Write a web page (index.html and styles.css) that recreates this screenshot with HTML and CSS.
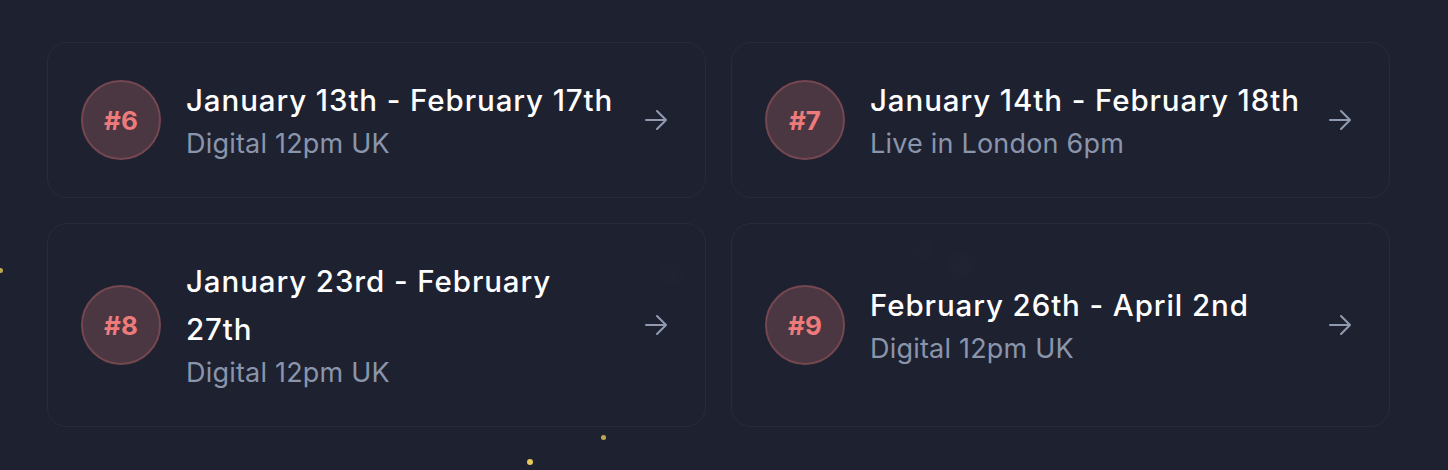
FILE: index.html
```html
<!DOCTYPE html>
<html lang="en">
<head>
<meta charset="utf-8">
<title>Cohorts</title>
<link rel="stylesheet" href="styles.css">
</head>
<body>
<div class="page">
  <span class="dot dot-a"></span>
  <span class="dot dot-b"></span>
  <span class="dot dot-c"></span>
  <span class="glow glow-a"></span>
  <span class="glow glow-b"></span>
  <span class="glow glow-c"></span>
  <div class="grid">
    <a class="card" href="#">
      <div class="badge">#6</div>
      <div class="info">
        <div class="title">January 13th - February 17th</div>
        <div class="sub">Digital 12pm UK</div>
      </div>
      <svg class="arrow" viewBox="0 0 24 24" width="24" height="24"><path d="M2 12h20M13 3l9 9-9 9" fill="none" stroke="currentColor" stroke-width="2.1" stroke-linecap="round" stroke-linejoin="round"/></svg>
    </a>
    <a class="card" href="#">
      <div class="badge">#7</div>
      <div class="info">
        <div class="title">January 14th - February 18th</div>
        <div class="sub">Live in London 6pm</div>
      </div>
      <svg class="arrow" viewBox="0 0 24 24" width="24" height="24"><path d="M2 12h20M13 3l9 9-9 9" fill="none" stroke="currentColor" stroke-width="2.1" stroke-linecap="round" stroke-linejoin="round"/></svg>
    </a>
    <a class="card" href="#">
      <div class="badge">#8</div>
      <div class="info">
        <div class="title">January 23rd - February 27th</div>
        <div class="sub">Digital 12pm UK</div>
      </div>
      <svg class="arrow" viewBox="0 0 24 24" width="24" height="24"><path d="M2 12h20M13 3l9 9-9 9" fill="none" stroke="currentColor" stroke-width="2.1" stroke-linecap="round" stroke-linejoin="round"/></svg>
    </a>
    <a class="card" href="#">
      <div class="badge">#9</div>
      <div class="info">
        <div class="title">February 26th - April 2nd</div>
        <div class="sub">Digital 12pm UK</div>
      </div>
      <svg class="arrow" viewBox="0 0 24 24" width="24" height="24"><path d="M2 12h20M13 3l9 9-9 9" fill="none" stroke="currentColor" stroke-width="2.1" stroke-linecap="round" stroke-linejoin="round"/></svg>
    </a>
  </div>
</div>
</body>
</html>
```
FILE: styles.css
```css
* { box-sizing: border-box; }
html, body {
  margin: 0;
  padding: 0;
  background: #1e2230;
}
body {
  font-family: Inter, "Noto Sans", sans-serif;
  width: 1448px;
  height: 470px;
  overflow: hidden;
}
.page {
  position: relative;
  width: 1448px;
  height: 470px;
  padding: 42px 58px 0 47px;
}
.grid {
  position: relative;
  display: grid;
  grid-template-columns: 1fr 1fr;
  column-gap: 25px;
  row-gap: 25px;
}
.card {
  display: flex;
  align-items: center;
  padding: 0 37px 0 33px;
  min-height: 155px;
  border: 1px solid #272c3b;
  border-radius: 20px;
  background: rgba(30, 34, 48, 0.6);
  text-decoration: none;
}
.badge {
  flex: 0 0 80px;
  width: 80px;
  height: 80px;
  border-radius: 50%;
  background: #4a3742;
  border: 2px solid #75474f;
  color: #ee7b7b;
  font-weight: 700;
  font-size: 26px;
  display: flex;
  align-items: center;
  justify-content: center;
}
.info {
  flex: 0 1 434px;
  margin-left: 25px;
  margin-right: auto;
  padding: 33px 0;
}
.title {
  color: #ffffff;
  font-size: 29.5px;
  letter-spacing: 0.9px;
  font-weight: 500;
  line-height: 48px;
}
.sub {
  color: #8a95ab;
  font-size: 27px;
  letter-spacing: 0.2px;
  line-height: 40px;
}
.arrow {
  flex: 0 0 24px;
  color: #8f9ab0;
  width: 24px;
  height: 24px;
}
.dot {
  position: absolute;
  border-radius: 50%;
  background: #e7c85a;
}
.dot-a { left: -2px; top: 268px; width: 5px; height: 5px; opacity: 0.8; }
.dot-b { left: 601px; top: 435px; width: 5px; height: 5px; opacity: 0.8; }
.dot-c { left: 527px; top: 459px; width: 6px; height: 6px; }
.glow {
  position: absolute;
  border-radius: 50%;
  background: rgba(255, 255, 255, 0.03);
  filter: blur(6px);
}
.glow-a { left: 948px; top: 252px; width: 28px; height: 28px; }
.glow-b { left: 913px; top: 240px; width: 20px; height: 20px; }
.glow-c { left: 660px; top: 262px; width: 22px; height: 22px; }
```
